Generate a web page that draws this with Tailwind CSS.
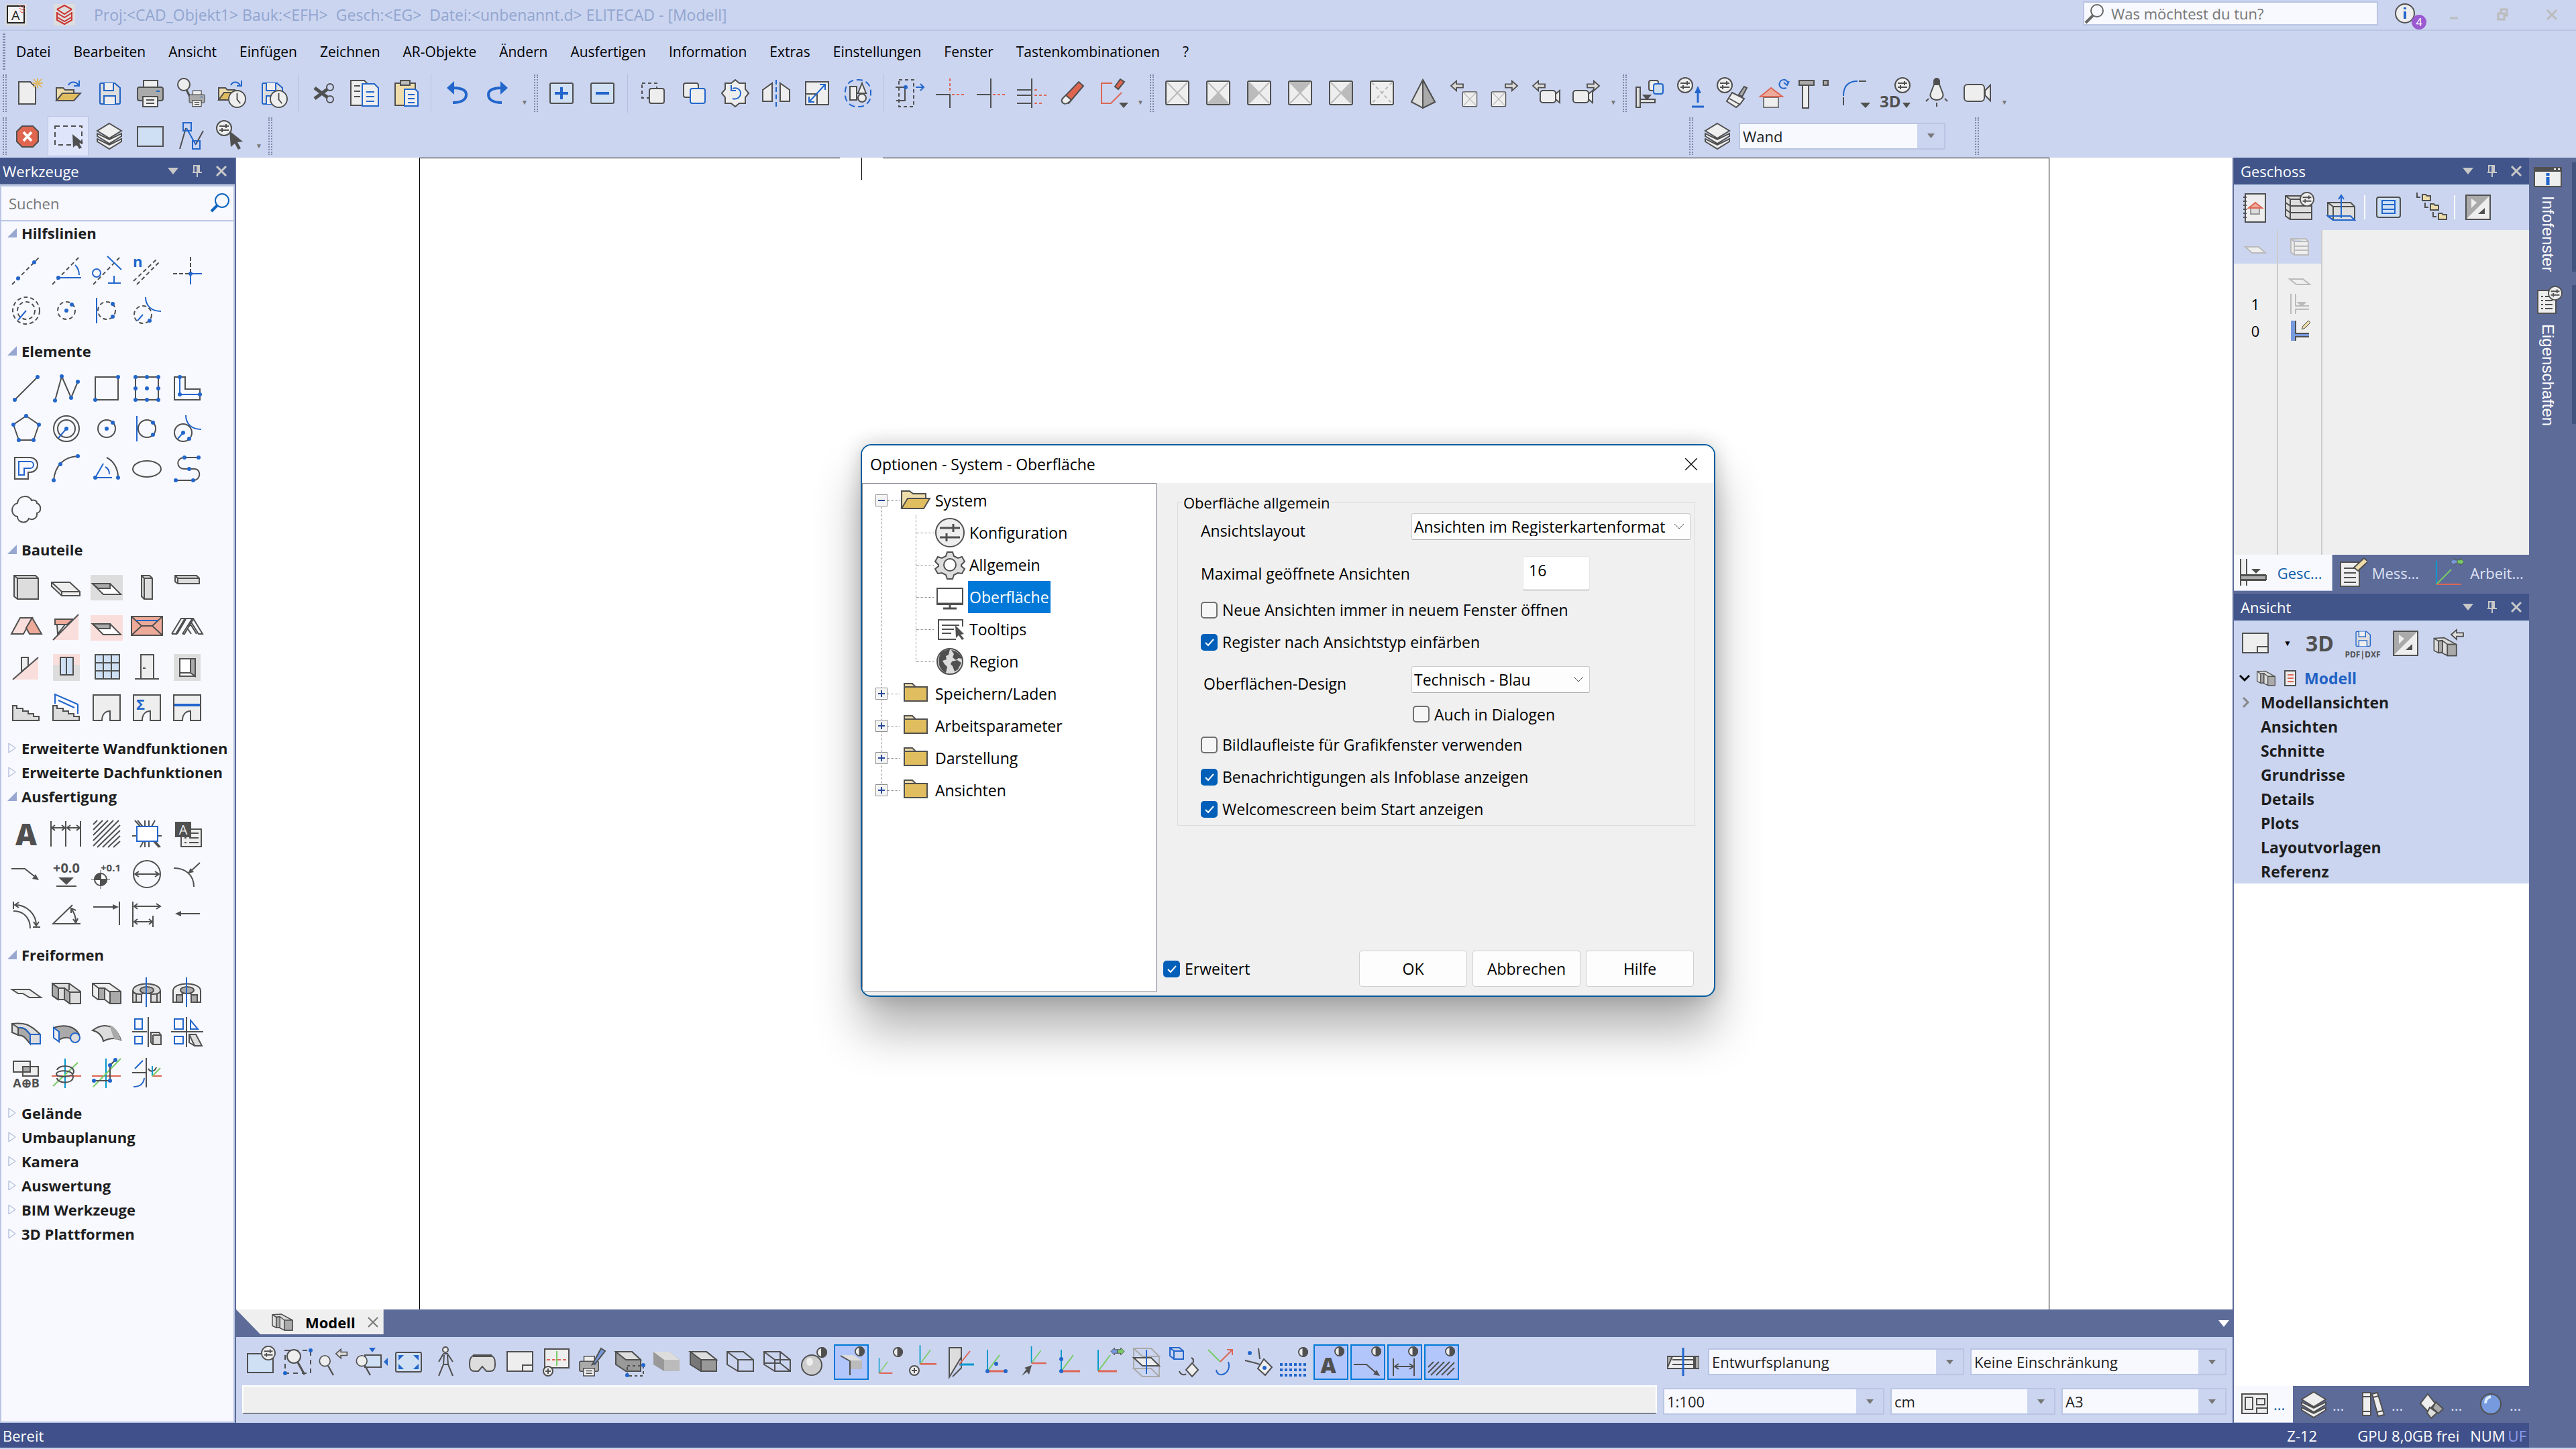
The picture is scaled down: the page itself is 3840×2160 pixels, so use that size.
<!DOCTYPE html>
<html lang="de">
<head>
    <meta charset="UTF-8">
    <meta name="viewport" content="width=device-width, initial-scale=1.0">
    <title>ELITECAD - [Modell]</title>
    <script src="https://cdn.jsdelivr.net/npm/@tailwindcss/browser@4"></script>
</head>
<body class="flex h-screen flex-col overflow-hidden bg-[#cbd5f0] font-['Open_Sans','Noto_Sans',sans-serif] text-[22px] leading-7 text-[#1e1e1e]">

    <!-- Gemeinsame Symbole -->
    <svg class="hidden">
        <symbol id="cfg" viewBox="0 0 24 24"><circle cx="12" cy="12" r="11" fill="#eee"/><path d="M5 9h14M5 15h14M15 6v6M9 12v6"/></symbol>
        <symbol id="half" viewBox="0 0 16 16"><circle cx="8" cy="8" r="7" fill="#eee"/><path d="M8 1a7 7 0 0 1 0 14z" fill="#505050"/></symbol>
        <symbol id="layers" viewBox="0 0 48 48"><path d="M6 32l18 11 18-11v-4l-18 9-18-9zM6 24l18 11 18-11v-4l-18 9-18-9zM24 5l18 11-18 11L6 16z" fill="#eee"/></symbol>
        <symbol id="model" viewBox="0 0 48 48"><path d="M4 9l18-1 22 12v20H28L16 34l-4 1-8-4z" fill="#ddd"/><path d="M4 9l8 5v21M12 14l7-1v21M19 13l9 7v20M28 20h16" /><path d="M12 14l7-1v21l-7 1zM28 20h16v20H28z" fill="#aaa"/></symbol>
        <symbol id="sheet" viewBox="0 0 48 48"><rect x="7" y="6" width="34" height="35" rx="2" fill="#eee"/><path d="M9 8l30 31M39 8L9 39" stroke="#bbb"/></symbol>
        <symbol id="floppy" viewBox="0 0 48 48"><path d="M12 9h20l8 7v22a2 2 0 0 1-2 2H12a2 2 0 0 1-2-2V11a2 2 0 0 1 2-2z" fill="#ddd"/><path d="M16 9v11h14V9M16 40V28h17v12" fill="#eee"/></symbol>
        <symbol id="printer" viewBox="0 0 48 48"><path d="M14 16V5h21v11" fill="#eee"/><rect x="5" y="15" width="38" height="20" rx="3" fill="#aaa"/><path d="M13 29h22v15H13zM18 34h12M18 39h12" fill="#eee"/><path d="M33 21h5" stroke="#26c"/></symbol>
        <symbol id="clock" viewBox="0 0 28 28"><circle cx="14" cy="14" r="13" fill="#eee"/><path d="M14 5v10l5 6"/></symbol>
        <symbol id="lens" viewBox="0 0 48 48"><circle cx="18" cy="16" r="10" fill="#eee"/><path d="M24 25l10 18" stroke-width="3"/></symbol>
        <symbol id="invert" viewBox="0 0 48 48"><rect x="6" y="6" width="36" height="36" fill="#eee"/><path d="M7 7h34L7 41z" fill="#aaa" stroke="none"/><path d="M14 11v14l8-8z" fill="#eee" stroke="none"/><path d="M34 25v9H24z" fill="#505050" stroke="none"/></symbol>
        <symbol id="arrowL" viewBox="0 0 24 20"><path d="M2 10l9-8v5h11v6H11v5z" fill="#ddd"/></symbol>
        <symbol id="axes" viewBox="0 0 48 48"><path d="M12 6v32" stroke="#09c"/><path d="M12 38L30 14" stroke="#7c6"/><path d="M12 38h28" stroke="#d65" stroke-width="3"/></symbol>
        <symbol id="swap" viewBox="0 0 24 14"><path d="M1 7l6-6v3h5v6H7v3z" fill="#79d" /><path d="M23 7l-6-6v3h-5v6h5v3z" fill="#7c6"/></symbol>
        <symbol id="down" viewBox="0 0 16 10"><path d="M0 0h16L8 10z" fill="currentColor" stroke="none"/></symbol>
        <symbol id="pin" viewBox="0 0 16 18"><path d="M3 10V1h8v9M8 1v9M1 11h14M8 11v7M9 1h2v9H9z"/></symbol>
        <symbol id="close" viewBox="0 0 16 16"><path d="M1 1l14 14M15 1L1 15"/></symbol>
        <symbol id="folder" viewBox="0 0 48 36"><path d="M7 8V3h12l4 4v5" fill="#eda"/><path d="M7 8h34v21H7z" fill="#e0be60"/></symbol>
    </svg>

    <!-- Titelleiste -->
    <header class="flex h-[46px] shrink-0 items-center border-b-2 border-[#b9c5e3]">
        <svg class="ml-2 size-8 shrink-0 overflow-visible" viewBox="0 0 32 32" fill="none"><path fill="#ddd" d="M0 0h32v32H0z"/><path d="M3 3h25v25H3z" fill="#f4f4f4" stroke="#222" stroke-width="2"/><text x="9" y="24" font-size="20" fill="#222">A</text><path d="M21 2l4 3 4-3M21 6l4 3 4-3M21 10l4 3 4-3" stroke="#d44"/></svg>
        <svg class="ml-10 size-8 shrink-0" viewBox="0 0 32 32" fill="none" stroke="#c33" stroke-width="2"><path fill="#ddd" stroke="none" d="M0 0h32v32H0z"/><path d="M5 8l11-6 11 6M5 8l11 7 11-7M5 12v12l11 6 11-6V12M6 14l10 6 10-6M6 20l10 6 10-6"/></svg>
        <h1 class="ml-7 text-[23px] whitespace-pre text-[#92a5cf]">Proj:&lt;CAD_Objekt1&gt; Bauk:&lt;EFH&gt;  Gesch:&lt;EG&gt;  Datei:&lt;unbenannt.d&gt; ELITECAD - [Modell]</h1>
        <label class="mr-5 mb-1 ml-auto flex h-9 w-[440px] items-center border-2 border-[#b9c5e3] bg-[#f8f9fe]">
            <svg class="size-8" viewBox="0 0 32 32" fill="none" stroke="#666" stroke-width="2"><circle cx="19" cy="12" r="9"/><path d="M13 19L2 30" stroke-width="4"/></svg>
            <input type="text" aria-label="Suche" placeholder="Was möchtest du tun?" class="min-w-0 flex-1 pl-2 outline-none placeholder:text-[#767676]">
        </label>
        <button aria-label="Info" class="relative w-14 pb-1">
            <svg class="size-10" viewBox="0 0 40 40"><circle cx="20" cy="20" r="14" fill="#eee" stroke="#505050" stroke-width="2"/><path d="M20 17v11M20 11v3" stroke="#26c" stroke-width="4"/></svg>
            <span class="absolute right-1 bottom-0 size-[22px] rounded-full bg-[#9b59d0] text-center text-base leading-[22px] text-white">4</span>
        </button>
        <div class="flex fill-none stroke-[#bbb] stroke-3">
            <button aria-label="Minimieren" class="grid w-[73px] place-items-center"><svg class="size-6" viewBox="0 0 24 24"><path d="M6 17h12"/></svg></button>
            <button aria-label="Wiederherstellen" class="grid w-[73px] place-items-center"><svg class="size-6" viewBox="0 0 24 24"><path d="M5 10h9v9H5zM9 9V4h9v9h-3"/></svg></button>
            <button aria-label="Schließen" class="grid w-[73px] place-items-center"><svg class="size-4"><use href="#close"/></svg></button>
        </div>
    </header>

    <!-- Menü -->
    <nav class="flex h-[62px] shrink-0 items-center text-[21px] text-black">
        <span class="mr-4 ml-1 h-[54px] w-1 border-x-2 border-dotted border-[#7d88a8]"></span>
        <div class="flex gap-[34px]">
            <a href="#">Datei</a><a href="#">Bearbeiten</a><a href="#">Ansicht</a><a href="#">Einfügen</a><a href="#">Zeichnen</a><a href="#">AR-Objekte</a><a href="#">Ändern</a><a href="#">Ausfertigen</a><a href="#">Information</a><a href="#">Extras</a><a href="#">Einstellungen</a><a href="#">Fenster</a><a href="#">Tastenkombinationen</a><a href="#">?</a>
        </div>
    </nav>

    <!-- Symbolleiste 1 -->
    <div class="flex h-[62px] shrink-0 items-center fill-none stroke-[#505050] stroke-2 [&_svg]:size-12 [&_svg]:overflow-visible [&>button]:grid [&>button]:w-[61px] [&>button]:shrink-0 [&>button]:place-items-center [&>hr]:mx-[7px] [&>hr]:h-[58px] [&>hr]:w-px [&>hr]:border-0 [&>hr]:bg-[#b4c0e0] [&>span]:mx-1 [&>span]:h-[56px] [&>span]:w-[6px] [&>span]:shrink-0 [&>span]:border-x-2 [&>span]:border-dotted [&>span]:border-[#7d88a8] [&>span:first-child]:mr-0 [&>i]:w-5 [&>i]:shrink-0 [&>i]:self-end [&>i]:pb-[10px] [&>i]:text-center [&>i]:text-[10px] [&>i]:leading-4 [&>i]:text-[#777] [&>i]:not-italic">
        <span></span>
        <button aria-label="Neu"><svg viewBox="0 0 48 48"><path d="M11 7h17l8 8v25H11z" fill="#eee"/><path d="M39 1v16M31 9h16M33 3l12 12M45 3L33 15" stroke="#db6"/></svg></button>
        <button aria-label="Öffnen"><svg viewBox="0 0 48 48"><path d="M6 35V16h10l3 3h13v6" fill="#eda"/><path d="M6 35l9-11h27l-10 11z" fill="#e0be60"/><path d="M24 12c3-6 11-6 15 0M40 5v8h-8" stroke="#26c"/></svg></button>
        <button aria-label="Speichern" class="stroke-[#2062c4]"><svg viewBox="0 0 48 48"><use href="#floppy"/></svg></button>
        <button aria-label="Drucken"><svg viewBox="0 0 48 48"><use href="#printer"/></svg></button>
        <button aria-label="Druckvorschau"><svg viewBox="0 0 48 48"><circle cx="13" cy="11" r="9" fill="#eee"/><path d="M17 19l5 10" stroke-width="3"/><use href="#printer" x="18" y="17" width="29" height="29"/></svg></button>
        <button aria-label="Zuletzt geöffnet"><svg viewBox="0 0 48 48"><path d="M4 34V16h10l3 3h11v6" fill="#eda"/><path d="M4 34l8-11h20l-8 11z" fill="#e0be60"/><path d="M22 12c3-6 10-6 14 0M38 5v8h-7" stroke="#26c"/><use href="#clock" x="18" y="19" width="27" height="27"/></svg></button>
        <button aria-label="Zuletzt gespeichert"><svg viewBox="0 0 48 48"><g stroke="#26c"><use href="#floppy" x="-2"/></g><use href="#clock" x="19" y="19" width="27" height="27"/></svg></button>
        <hr>
        <button aria-label="Ausschneiden"><svg viewBox="0 0 48 48"><circle cx="33" cy="15" r="5"/><circle cx="33" cy="33" r="5"/><path d="M29 18L10 32M29 30L10 16" stroke-width="5"/></svg></button>
        <button aria-label="Kopieren"><svg viewBox="0 0 48 48"><path d="M3 5h20l5 5v32H3zM8 13h9M8 21h9M8 29h9" fill="#eee"/><path d="M20 10h18l6 6v27H20zM26 22h12M26 29h12M26 36h12" fill="#eee" stroke="#26c"/></svg></button>
        <button aria-label="Einfügen"><svg viewBox="0 0 48 48"><path d="M8 9h30v33H8z" fill="#eda"/><path d="M16 5h14v7H16z" fill="#bbb"/><path d="M22 18h16l4 4v21H22zM27 26h10M27 32h10M27 38h10" fill="#eee" stroke="#26c"/></svg></button>
        <hr>
        <button aria-label="Rückgängig"><svg viewBox="0 0 48 48"><path d="M18 38c14 0 20-5 20-12s-8-10-20-10" stroke="#26c" stroke-width="4" fill="none"/><path d="M20 6v20L9 16z" fill="#26c" stroke="none"/></svg></button>
        <button aria-label="Wiederholen"><svg viewBox="0 0 48 48"><path d="M30 38c-14 0-20-5-20-12s8-10 20-10" stroke="#26c" stroke-width="4" fill="none"/><path d="M28 6v20l11-10z" fill="#26c" stroke="none"/></svg></button>
        <i>▼</i><span></span>
        <button aria-label="Einblenden"><svg viewBox="0 0 48 48"><rect x="7" y="9" width="34" height="30" rx="2" fill="#d1e0f3"/><path d="M24 15v18M14 24h20" stroke="#26c" stroke-width="4"/></svg></button>
        <button aria-label="Ausblenden"><svg viewBox="0 0 48 48"><rect x="7" y="9" width="34" height="30" rx="2" fill="#d1e0f3"/><path d="M14 24h20" stroke="#26c" stroke-width="4"/></svg></button>
        <hr>
        <button aria-label="Verschieben"><svg viewBox="0 0 48 48"><rect x="7" y="9" width="22" height="22" stroke-dasharray="5 4"/><rect x="18" y="17" width="22" height="22" rx="3" fill="#eee"/></svg></button>
        <button aria-label="Objekt kopieren"><svg viewBox="0 0 48 48"><rect x="8" y="9" width="22" height="21" rx="3" fill="#eee"/><rect x="18" y="17" width="22" height="22" rx="3" fill="#eee" stroke="#26c"/></svg></button>
        <button aria-label="Drehen"><svg viewBox="0 0 48 48"><path d="M24 4l6 5h9v9l5 6-5 6v9h-9l-6 5-6-5H9v-9l-5-6 5-6V9h9z" fill="#eee"/><path d="M20 32c6 2 12-2 12-8s-6-9-12-7M18 12v8h7" stroke="#26c"/></svg></button>
        <button aria-label="Spiegeln"><svg viewBox="0 0 48 48"><path d="M4 19L18 9v27H4zM44 19L30 9v27h14z" fill="#eee"/><path d="M24 4v40" stroke="#26c" stroke-dasharray="7 4"/></svg></button>
        <button aria-label="Skalieren"><svg viewBox="0 0 48 48"><path d="M7 7h34v34H7zM7 25h17v16" fill="#eee"/><path d="M12 37L36 11M28 11h8v8M12 29v8h8" stroke="#26c"/></svg></button>
        <button aria-label="Anordnen"><svg viewBox="0 0 48 48"><rect x="5" y="4" width="38" height="40" rx="17" stroke="#26c" stroke-dasharray="9 5"/><path d="M12 14h10v20H12zM30 9l6 15H24z" fill="#eee"/><circle cx="30" cy="31" r="6" fill="#eee"/></svg></button>
        <hr>
        <button aria-label="Strecken"><svg viewBox="0 0 48 48"><path d="M9 4h22v40H9z" stroke-dasharray="5 4"/><path d="M4 15h14v20H5"/><path d="M34 15h12M41 10l5 5-5 5" stroke="#26c"/><circle cx="19" cy="15" r="3" fill="#26c" stroke="none"/></svg></button>
        <button aria-label="Ecke"><svg viewBox="0 0 48 48"><path d="M3 26h21v20"/><path d="M24 2v22M27 26h20" stroke="#d65" stroke-dasharray="4 3"/></svg></button>
        <button aria-label="Trimmen"><svg viewBox="0 0 48 48"><path d="M3 26h21M24 2v44"/><path d="M27 26h20" stroke="#d65" stroke-dasharray="4 3"/></svg></button>
        <button aria-label="Mehrfach trimmen"><svg viewBox="0 0 48 48"><path d="M24 2v44M2 19h22M2 27h22M2 39h22"/><path d="M28 19h5M28 27h20M28 39h14" stroke="#d65" stroke-dasharray="4 3"/></svg></button>
        <button aria-label="Löschen"><svg viewBox="0 0 48 48"><path d="M33 7l7 6-22 26-9-7z" fill="#e0654f"/><path d="M14 27l8 7c-5 6-10 7-13 4s-1-6 5-11z" fill="#eee"/></svg></button>
        <button aria-label="Teil löschen"><svg viewBox="0 0 48 48"><path d="M22 9H6v30h14l16-16" stroke="#d65"/><path d="M34 3l6 4-9 11-5-4z" fill="#e0654f"/><path d="M32 38h14l-7 8z" fill="#505050" stroke="none"/></svg></button>
        <i>▼</i><span></span>
        <button aria-label="Ansicht oben"><svg><use href="#sheet"/></svg></button>
        <button aria-label="Ansicht vorne"><svg viewBox="0 0 48 48"><use href="#sheet"/><path d="M24 24l15 16H9z" fill="#bbb" stroke="none"/></svg></button>
        <button aria-label="Ansicht links"><svg viewBox="0 0 48 48"><use href="#sheet"/><path d="M24 24L8 40V8z" fill="#bbb" stroke="none"/></svg></button>
        <button aria-label="Ansicht hinten"><svg viewBox="0 0 48 48"><use href="#sheet"/><path d="M24 24L40 7H8z" fill="#bbb" stroke="none"/></svg></button>
        <button aria-label="Ansicht rechts"><svg viewBox="0 0 48 48"><use href="#sheet"/><path d="M24 24l16 16V8z" fill="#bbb" stroke="none"/></svg></button>
        <button aria-label="Ansicht unten"><svg viewBox="0 0 48 48"><rect x="7" y="6" width="34" height="35" rx="2" fill="#eee"/><path d="M9 8l30 31M39 8L9 39" stroke="#bbb" stroke-dasharray="5 4"/></svg></button>
        <button aria-label="Axonometrie"><svg viewBox="0 0 48 48"><path d="M24 4l18 33-18 9L7 37z" fill="#ddd"/><path d="M24 4l18 33-18 9z" fill="#aaa"/></svg></button>
        <button aria-label="Vorherige Ansicht"><svg viewBox="0 0 48 48"><use href="#arrowL" x="2" y="4" width="24" height="18"/><use href="#sheet" x="18" y="18" width="30" height="30"/></svg></button>
        <button aria-label="Nächste Ansicht"><svg viewBox="0 0 48 48"><g transform="matrix(-1 0 0 1 48 0)"><use href="#arrowL" x="2" y="4" width="24" height="18"/></g><use href="#sheet" x="0" y="18" width="30" height="30"/></svg></button>
        <button aria-label="Vorherige Kamera"><svg viewBox="0 0 48 48"><use href="#arrowL" x="2" y="4" width="24" height="18"/><rect x="16" y="20" width="23" height="18" rx="4" fill="#eee"/><path d="M39 25l6-5v18l-6-5z" fill="#eee"/></svg></button>
        <button aria-label="Nächste Kamera"><svg viewBox="0 0 48 48"><g transform="matrix(-1 0 0 1 48 0)"><use href="#arrowL" x="2" y="4" width="24" height="18"/></g><rect x="4" y="20" width="23" height="18" rx="4" fill="#eee"/><path d="M27 25l6-5v18l-6-5z" fill="#eee"/></svg></button>
        <i>▼</i><span></span>
        <button aria-label="Geschoss kopieren"><svg viewBox="0 0 48 48"><path d="M3 15h6v30H3zM9 33h22v5H9z" fill="#ddd"/><path d="M14 27h10l-5 6z" fill="#505050"/><rect x="22" y="5" width="14" height="15" rx="3" fill="#eee"/><rect x="29" y="10" width="14" height="15" rx="3" fill="#cde" stroke="#26c"/></svg></button>
        <button aria-label="Höhe einstellen"><svg viewBox="0 0 48 48"><use href="#cfg" x="3" width="24" height="24"/><path d="M34 38V18M25 44h18" stroke="#26c" stroke-width="3"/><path d="M34 13l5 11H29z" fill="#26c" stroke="none"/></svg></button>
        <button aria-label="Darstellung einstellen"><svg viewBox="0 0 48 48"><use href="#cfg" x="1" width="24" height="24"/><path d="M34 26l8-12 4 2-7 13z" fill="#aaa"/><path d="M24 23l18 9-6 8-6 5-14-9z" fill="#eee"/><path d="M20 32l16 9"/></svg></button>
        <button aria-label="Haus aktualisieren"><svg viewBox="0 0 48 48"><path d="M10 30h22v15H10z" fill="#eee" stroke="#777"/><path d="M5 29l16-13 17 13z" fill="#ea9" stroke="#d65"/><path d="M44 16c-8 3-12-3-10-8s9-6 12 0M48 6l-3 6-5-4" stroke="#26c"/></svg></button>
        <button aria-label="Stütze"><svg viewBox="0 0 48 48"><path d="M2 5h22v7H2zM38 5h7v7h-7z" fill="#aaa"/><path d="M7 12h9v34H7z" fill="#eee"/></svg></button>
        <button aria-label="Rundung"><svg viewBox="0 0 48 48"><path d="M7 28C7 14 14 6 28 6" stroke="#26c"/><path d="M30 6h11M7 30v12"/><path d="M32 38h15l-7 8z" fill="#505050" stroke="none"/></svg></button>
        <button aria-label="3D Einstellungen"><svg viewBox="0 0 48 48"><use href="#cfg" x="22" width="24" height="24"/><text x="0" y="45" font-size="24" font-weight="700" fill="#505050" stroke="none">3D</text><path d="M34 38h12l-6 8z" fill="#505050" stroke="none"/></svg></button>
        <button aria-label="Licht"><svg viewBox="0 0 48 48"><path d="M20 6a4 4 0 0 1 8 0v3h-8z" fill="#505050"/><path d="M20 11h8l5 13c2 5-2 10-9 10s-11-5-9-10zM12 32l-4 4M36 32l4 4M24 38v6" fill="#eee"/></svg></button>
        <button aria-label="Kamera"><svg viewBox="0 0 48 48"><rect x="4" y="11" width="30" height="25" rx="5" fill="#eee"/><path d="M35 20l8-8v23l-8-8z" fill="#eee"/></svg></button>
        <i>▼</i>
    </div>

    <!-- Symbolleiste 2 -->
    <div class="flex h-[65px] shrink-0 items-center fill-none stroke-[#505050] stroke-2 [&>button]:grid [&>button]:h-[60px] [&>button]:w-[61px] [&>button]:shrink-0 [&>button]:place-items-center [&>button>svg]:size-12 [&>span]:mx-1 [&>span]:h-[56px] [&>span]:w-[6px] [&>span]:shrink-0 [&>span]:border-x-2 [&>span]:border-dotted [&>span]:border-[#7d88a8] [&>span:first-child]:mr-0">
        <span></span>
        <button aria-label="Abbrechen"><svg viewBox="0 0 48 48"><path d="M16 9h16l8 8v15l-8 8H16l-8-8V17z" fill="#e0654f"/><path d="M18 18l12 13M30 18L18 31" stroke="#fff" stroke-width="4"/></svg></button>
        <button aria-label="Auswahl" class="border border-[#b9c5e3] bg-[#dfe6fb]"><svg viewBox="0 0 48 48"><path d="M4 9h40v28H4z" stroke-dasharray="7 5"/><path d="M30 21l16 13-6 1 4 6-4 2-4-7-5 5z" fill="#505050" stroke="none"/></svg></button>
        <button aria-label="Ebenen"><svg><use href="#layers"/></svg></button>
        <button aria-label="Fläche"><svg viewBox="0 0 48 48"><path d="M5 10h38v29H5z" fill="#cfe0f4"/></svg></button>
        <button aria-label="Punkte"><svg viewBox="0 0 48 48"><path d="M7 43L16 12M31 36L42 16"/><path d="M17 12l14 25M12 4h12v12H12zM26 31h11v12H26z" stroke="#26c"/></svg></button>
        <button aria-label="Auswahlfilter"><svg viewBox="0 0 48 48"><use href="#cfg" width="24" height="24"/><path d="M20 16l20 16-8 1 5 9-4 2-5-9-6 5z" fill="#505050" stroke="none"/></svg></button>
        <i class="w-5 self-end pb-[10px] text-center text-[10px] leading-4 text-[#777] not-italic">▼</i><span></span>
        <div class="ml-auto flex h-full w-[1322px] items-center [&>span]:h-[56px] [&>span]:w-[6px] [&>span]:border-x-2 [&>span]:border-dotted [&>span]:border-[#7d88a8]">
            <span></span>
            <svg class="mr-2 ml-3 size-12"><use href="#layers"/></svg>
            <div class="mr-11 grid h-10 w-[308px] border-2 border-[#b9c5e3] bg-[#f8f9fe]">
                <select aria-label="Ebene" class="appearance-none pl-1 [grid-area:1/1]"><option>Wand</option></select>
                <div class="pointer-events-none grid w-10 place-items-center justify-self-end bg-[#cbd5f0] text-[#777] [grid-area:1/1]"><svg class="h-[7px] w-[11px]"><use href="#down"/></svg></div>
            </div>
            <span></span>
        </div>
    </div>

    <main class="flex min-h-0 flex-1">

        <!-- Werkzeuge -->
        <aside class="flex w-[352px] shrink-0 flex-col border-r-2 border-[#5d6b99] bg-[#f8f9fe]">
            <div class="flex h-10 shrink-0 items-center gap-5 bg-[#41558b] pr-3 pl-1 text-white">
                <h2 class="mr-auto">Werkzeuge</h2>
                <svg class="h-[10px] w-4 text-[#c8c8c8]"><use href="#down"/></svg>
                <svg class="h-[18px] w-4 fill-none stroke-[#c8c8c8] stroke-2"><use href="#pin"/></svg>
                <svg class="size-4 fill-none stroke-[#c8c8c8] stroke-3"><use href="#close"/></svg>
            </div>
            <label class="mt-px flex h-[54px] shrink-0 items-center border-2 border-[#b9c5e3] pr-1">
                <input type="text" aria-label="Werkzeug suchen" placeholder="Suchen" class="min-w-0 flex-1 pl-[11px] outline-none placeholder:text-[#767676]">
                <svg class="size-8" viewBox="0 0 32 32" fill="none" stroke="#0a64c0"><circle cx="19" cy="12" r="10" stroke-width="2"/><path d="M12 19L3 28" stroke-width="4"/></svg>
            </label>

            <div class="flex-1 overflow-hidden border-x-2 border-b-2 border-[#b9c5e3] fill-none stroke-[#505050] stroke-2 font-bold [&_h3]:flex [&_h3]:h-9 [&_h3]:items-center [&_h3]:pb-[2px] [&_h3>svg]:mr-[6px] [&_h3>svg]:ml-2 [&_h3>svg]:size-4 [&_h3>svg]:stroke-1 [&_button]:grid [&_button]:h-[60px] [&_button]:place-items-center [&_button>svg]:size-12 [&_button>svg]:overflow-visible [&_section>div]:ml-[7px] [&_section>div]:grid [&_section>div]:w-[300px] [&_section>div]:grid-cols-5 [&_section>div]:pt-[7px] [&_section>div]:pb-[13px]">
                <section>
                    <h3><svg viewBox="0 0 16 16"><path d="M15 1v14H1z" fill="#97a7cf" stroke="none"/></svg>Hilfslinien</h3>
                    <div>
                        <button aria-label="Hilfslinie"><svg viewBox="0 0 48 48"><path d="M3 45L45 3" stroke-dasharray="6 4"/><g fill="#26c" stroke="none"><circle cx="12" cy="36" r="3"/><circle cx="36" cy="12" r="3"/></g></svg></button>
                        <button aria-label="Hilfslinie Winkel"><svg viewBox="0 0 48 48"><path d="M3 45L44 3" stroke-dasharray="6 4"/><path d="M12 35h34M37 16c4 4 6 9 6 15" stroke="#26c"/><circle cx="12" cy="35" r="3" fill="#26c" stroke="none"/></svg></button>
                        <button aria-label="Hilfslinie Tangente"><svg viewBox="0 0 48 48"><path d="M4 45L45 3" stroke-dasharray="6 4"/><g stroke="#26c"><circle cx="9" cy="28" r="6"/><path d="M25 3l21 20M26 43h19M35 43V32"/></g></svg></button>
                        <button aria-label="Hilfslinie parallel"><svg viewBox="0 0 48 48"><path d="M4 40L38 8M9 45l33-33" stroke-dasharray="6 4"/><text x="3" y="19" font-size="22" fill="#26c" stroke="none">n</text></svg></button>
                        <button aria-label="Hilfslinie Kreuz"><svg viewBox="0 0 48 48"><path d="M3 29h26M29 4v25" stroke-dasharray="6 3"/><path d="M29 29h17M29 29v16" stroke="#26c"/><circle cx="29" cy="29" r="3" fill="#26c" stroke="none"/></svg></button>
                        <button aria-label="Hilfskreise"><svg viewBox="0 0 48 48"><circle cx="24" cy="24" r="20" stroke-dasharray="6 4"/><circle cx="24" cy="24" r="13" stroke-dasharray="6 4"/><path d="M24 24L12 38" stroke="#26c"/></svg></button>
                        <button aria-label="Hilfskreis Punkt"><svg viewBox="0 0 48 48"><circle cx="24" cy="24" r="13" stroke-dasharray="6 4"/><g fill="#26c" stroke="none"><circle cx="24" cy="24" r="3"/><circle cx="32" cy="15" r="3"/></g></svg></button>
                        <button aria-label="Hilfskreis Linie"><svg viewBox="0 0 48 48"><circle cx="24" cy="24" r="13" stroke-dasharray="6 4"/><path d="M9 5v38" stroke="#26c"/><g fill="#26c" stroke="none"><circle cx="33" cy="14" r="3"/><circle cx="33" cy="33" r="3"/></g></svg></button>
                        <button aria-label="Hilfskreis Bogen"><svg viewBox="0 0 48 48"><circle cx="18" cy="30" r="13" stroke-dasharray="6 4"/><path d="M18 30l-8 9M22 4c0 13 9 21 23 21" stroke="#26c"/><circle cx="28" cy="39" r="3" fill="#26c" stroke="none"/></svg></button>
                    </div>
                </section>
                <section>
                    <h3><svg viewBox="0 0 16 16"><path d="M15 1v14H1z" fill="#97a7cf" stroke="none"/></svg>Elemente</h3>
                    <div>
                        <button aria-label="Linie"><svg viewBox="0 0 48 48"><path d="M7 41L41 7"/><g fill="#26c" stroke="none"><circle cx="7" cy="41" r="3"/><circle cx="41" cy="7" r="3"/></g></svg></button>
                        <button aria-label="Polylinie"><svg viewBox="0 0 48 48"><path d="M7 42L17 6l14 32L41 14"/><g fill="#26c" stroke="none"><circle cx="7" cy="42" r="3"/><circle cx="17" cy="6" r="3"/><circle cx="31" cy="38" r="3"/><circle cx="41" cy="14" r="3"/></g></svg></button>
                        <button aria-label="Rechteck"><svg viewBox="0 0 48 48"><path d="M7 7h34v34H7z"/><g fill="#26c" stroke="none"><circle cx="7" cy="41" r="3"/><circle cx="41" cy="7" r="3"/></g></svg></button>
                        <button aria-label="Rechteck Punkte"><svg viewBox="0 0 48 48"><path d="M7 7h34v34H7z"/><g fill="#26c" stroke="none"><circle cx="7" cy="7" r="3"/><circle cx="24" cy="7" r="3"/><circle cx="41" cy="7" r="3"/><circle cx="7" cy="24" r="3"/><circle cx="24" cy="24" r="3"/><circle cx="41" cy="24" r="3"/><circle cx="7" cy="41" r="3"/><circle cx="24" cy="41" r="3"/><circle cx="41" cy="41" r="3"/></g></svg></button>
                        <button aria-label="Doppellinie"><svg viewBox="0 0 48 48"><path d="M5 7h16v18h22v16H5z"/><path d="M13 7v26h30" stroke="#26c"/><g fill="#26c" stroke="none"><circle cx="13" cy="7" r="3"/><circle cx="13" cy="33" r="3"/><circle cx="43" cy="33" r="3"/></g></svg></button>
                        <button aria-label="Polygon"><svg viewBox="0 0 48 48"><path d="M24 5l19 13-8 23H13L5 18z"/><g fill="#26c" stroke="none"><circle cx="24" cy="5" r="3"/><circle cx="43" cy="18" r="3"/><circle cx="35" cy="41" r="3"/><circle cx="13" cy="41" r="3"/><circle cx="5" cy="18" r="3"/></g></svg></button>
                        <button aria-label="Kreise"><svg viewBox="0 0 48 48"><circle cx="24" cy="24" r="19"/><circle cx="24" cy="24" r="13"/><path d="M24 24L12 38" stroke="#26c"/><circle cx="24" cy="24" r="3" fill="#26c" stroke="none"/></svg></button>
                        <button aria-label="Kreis"><svg viewBox="0 0 48 48"><circle cx="24" cy="24" r="13"/><g fill="#26c" stroke="none"><circle cx="24" cy="24" r="3"/><circle cx="33" cy="15" r="3"/></g></svg></button>
                        <button aria-label="Kreis Linie"><svg viewBox="0 0 48 48"><circle cx="24" cy="24" r="13"/><path d="M9 5v38" stroke="#26c"/><g fill="#26c" stroke="none"><circle cx="33" cy="15" r="3"/><circle cx="33" cy="33" r="3"/></g></svg></button>
                        <button aria-label="Kreis Bogen"><svg viewBox="0 0 48 48"><circle cx="18" cy="30" r="13"/><path d="M18 30l-8 9M22 4c0 13 9 21 23 21" stroke="#26c"/><g fill="#26c" stroke="none"><circle cx="18" cy="30" r="3"/><circle cx="27" cy="39" r="3"/></g></svg></button>
                        <button aria-label="Kontur"><svg viewBox="0 0 48 48"><path d="M7 7h23a11 11 0 0 1 0 22h-3v10H7z"/><path d="M13 13h17a5 5 0 0 1 0 10h-9v10h-8z" stroke="#26c"/></svg></button>
                        <button aria-label="Bogen"><svg viewBox="0 0 48 48"><path d="M5 41C7 20 19 6 41 5"/><g fill="#26c" stroke="none"><circle cx="5" cy="41" r="3"/><circle cx="15" cy="17" r="3"/><circle cx="41" cy="5" r="3"/></g></svg></button>
                        <button aria-label="Bogen Winkel"><svg viewBox="0 0 48 48"><path d="M24 7c10 5 17 16 17 30"/><path d="M32 37H7l12-21M22 21c4 2 6 6 6 11" stroke="#26c"/><g fill="#26c" stroke="none"><circle cx="7" cy="37" r="3"/><circle cx="41" cy="37" r="3"/></g></svg></button>
                        <button aria-label="Ellipse"><svg viewBox="0 0 48 48"><ellipse cx="24" cy="24" rx="21" ry="12"/></svg></button>
                        <button aria-label="Spline"><svg viewBox="0 0 48 48"><path d="M41 7H20c-13 0-13 17 0 17h15c10 0 10 17-2 17H7"/><g fill="#26c" stroke="none"><circle cx="20" cy="7" r="3"/><circle cx="41" cy="7" r="3"/><circle cx="27" cy="24" r="3"/><circle cx="33" cy="41" r="3"/><circle cx="7" cy="41" r="3"/></g></svg></button>
                        <button aria-label="Wolke"><svg viewBox="0 0 48 48"><path d="M11 15C12 3 29 2 32 11c4-1 8 0 8 4 7 3 7 13 0 15 1 8-7 11-12 8-4 9-17 6-17-3C1 34 0 18 11 15z"/></svg></button>
                    </div>
                </section>
                <section>
                    <h3><svg viewBox="0 0 16 16"><path d="M15 1v14H1z" fill="#97a7cf" stroke="none"/></svg>Bauteile</h3>
                    <div>
                        <button aria-label="Wand"><svg viewBox="0 0 48 48"><path d="M6 7h32l4 4v31H11l-5-4z" fill="#ddd"/><path d="M6 7l5 4h31M11 11v31"/></svg></button>
                        <button aria-label="Decke"><svg viewBox="0 0 48 48"><path d="M2 17h27l15 14v6H17L2 23z" fill="#eee"/><path d="M2 17l15 14h27M17 31v6"/></svg></button>
                        <button aria-label="Aussparung Decke"><svg viewBox="0 0 48 48"><path d="M0 6h48v38H0z" fill="#ddd" stroke="none"/><path d="M3 19h26l16 16H19z" fill="#fff"/><path d="M3 19h26v7H11z" fill="#aaa"/></svg></button>
                        <button aria-label="Stütze"><svg viewBox="0 0 48 48"><path d="M16 7h12l4 4v31H20l-4-4z" fill="#ddd"/><path d="M16 7l4 4h12M20 11v31"/></svg></button>
                        <button aria-label="Unterzug"><svg viewBox="0 0 48 48"><path d="M6 7h32l4 4v8H10l-4-3z" fill="#ddd"/><path d="M6 7l4 4h32M10 11v8"/></svg></button>
                        <button aria-label="Dach"><svg viewBox="0 0 48 48"><path d="M2 34l13-24h18L20 34z" fill="#f9dedb"/><path d="M33 10l14 24H29l-5-9z" fill="#ea9"/></svg></button>
                        <button aria-label="Gaube"><svg viewBox="0 0 48 48"><path d="M4 43L42 5v38z" fill="#f9dedb" stroke="none"/><path d="M10 20h12L11 34z" fill="#eee"/><path d="M7 12h27l-9 8H7z" fill="#ea9"/><path d="M4 43L42 5"/></svg></button>
                        <button aria-label="Aussparung Dach"><svg viewBox="0 0 48 48"><path d="M0 6h48v38H0z" fill="#f9dedb" stroke="none"/><path d="M3 19h26l16 16H19z" fill="#fff"/><path d="M3 19h26v7H11z" fill="#aaa"/></svg></button>
                        <button aria-label="Walmdach"><svg viewBox="0 0 48 48"><path d="M1 8h46v28H1z" fill="#ea9"/><path d="M1 8l15 14h16L47 8M1 36l15-14M47 36L32 22"/><path d="M8 14h32" stroke="#26c"/></svg></button>
                        <button aria-label="Sparren"><svg viewBox="0 0 48 48"><path d="M1 34l14-23h18l14 23h-6L29 15M9 34l13-22M7 34L20 12M17 34l14-22M20 34L33 12M38 34L28 18M30 34l-6-9M1 34h8M17 34h4"/></svg></button>
                        <button aria-label="Kamin"><svg viewBox="0 0 48 48"><path d="M4 42L42 9v33z" fill="#f9dedb" stroke="none"/><path d="M17 30V9h10v13z" fill="#eee"/><path d="M4 42L42 9"/></svg></button>
                        <button aria-label="Fenster"><svg viewBox="0 0 48 48"><path d="M4 4h40v16H4z" fill="#f9dedb" stroke="none"/><path d="M4 20h40v24H4z" fill="#ddd" stroke="none"/><path d="M15 9h19v26H15zM24 9v26" fill="#cfe0f4"/></svg></button>
                        <button aria-label="Fassade"><svg viewBox="0 0 48 48"><path d="M7 5h36v36H7zM7 17h36M7 29h36M19 5v36M31 5v36" fill="#cfe0f4"/></svg></button>
                        <button aria-label="Tür"><svg viewBox="0 0 48 48"><path d="M15 41V5h19v36" fill="#eee"/><path d="M6 41h36M18 25h4"/></svg></button>
                        <button aria-label="Nische"><svg viewBox="0 0 48 48"><path d="M4 4h40v40H4z" fill="#ddd" stroke="none"/><path d="M13 11h23v26H13z" fill="#fff"/><path d="M29 11h7v26l-7-5zM13 32h16" fill="#aaa"/></svg></button>
                        <button aria-label="Treppe"><svg viewBox="0 0 48 48"><path d="M4 21h6v4h9v4h8v4h8v4h8v6H4z" fill="#ddd"/></svg></button>
                        <button aria-label="Geländer"><svg viewBox="0 0 48 48"><path d="M4 21h6v4h9v4h8v4h8v4h8v6H4z" fill="#ddd"/><path d="M7 18V4l34 15v14M12 13l24 11" stroke="#26c"/></svg></button>
                        <button aria-label="Raum"><svg viewBox="0 0 48 48"><path d="M4 5h40v38H29V29c-8 0-12 6-12 14H4z" fill="#eee"/></svg></button>
                        <button aria-label="Raumauswertung"><svg viewBox="0 0 48 48"><path d="M4 5h40v38H29V29c-8 0-12 6-12 14H4z" fill="#eee"/><text x="8" y="27" font-size="22" fill="#26c" stroke="none">Σ</text></svg></button>
                        <button aria-label="Raumschnitt"><svg viewBox="0 0 48 48"><path d="M4 5h40v38H29V29c-8 0-12 6-12 14H4z" fill="#eee"/><path d="M5 20h38" stroke="#26c" stroke-width="4"/></svg></button>
                    </div>
                </section>
                <h3><svg viewBox="0 0 16 16"><path d="M3 1v14l10-7z" stroke="#97a7cf"/></svg>Erweiterte Wandfunktionen</h3>
                <h3><svg viewBox="0 0 16 16"><path d="M3 1v14l10-7z" stroke="#97a7cf"/></svg>Erweiterte Dachfunktionen</h3>
                <section>
                    <h3><svg viewBox="0 0 16 16"><path d="M15 1v14H1z" fill="#97a7cf" stroke="none"/></svg>Ausfertigung</h3>
                    <div>
                        <button aria-label="Text"><svg viewBox="0 0 48 48"><text x="24" y="41" font-size="44" font-weight="800" text-anchor="middle" fill="#505050" stroke="none">A</text></svg></button>
                        <button aria-label="Bemaßung"><svg viewBox="0 0 48 48"><path d="M1 5v38M23 5v38M45 5v38M3 15h19M25 15h18M7 11l-5 4 5 4M17 11l5 4-5 4M30 11l-5 4 5 4M39 11l5 4-5 4"/></svg></button>
                        <button aria-label="Schraffur"><svg viewBox="0 0 48 48"><path d="M4 10l6-6M4 18L18 4M4 26L26 4M4 34L34 4M4 42L42 4M10 44l34-33M18 44l26-25M26 44l18-17M34 44l10-9"/></svg></button>
                        <button aria-label="Ausschnitt"><svg viewBox="0 0 48 48"><path d="M2 27h44M21 4v40M27 4v40M6 4l36 40M10 4l34 40M36 4L14 44"/><path d="M9 13h31v22H9z" fill="#fff" stroke="#26c"/></svg></button>
                        <button aria-label="Legende"><svg viewBox="0 0 48 48"><path d="M15 17h30v26H15zM20 30h3M27 30h14M20 37h3M27 37h14M30 23h11" fill="#eee"/><path d="M6 6h24v23H6z" fill="#505050" stroke="none"/><text x="18" y="25" font-size="20" font-weight="400" text-anchor="middle" fill="#eee" stroke="none">A</text></svg></button>
                        <button aria-label="Hinweislinie"><svg viewBox="0 0 48 48"><path d="M2 16h20l19 15"/><path d="M43 33l-10-2 5-7z" fill="#505050" stroke="none"/></svg></button>
                        <button aria-label="Höhenkote"><svg viewBox="0 0 48 48"><text x="24" y="22" font-size="20" text-anchor="middle" fill="#505050" stroke="none">+0.0</text><path d="M12 29h23L24 40z" fill="#505050" stroke="none"/><path d="M9 42h30"/></svg></button>
                        <button aria-label="Höhenpunkt"><svg viewBox="0 0 48 48"><text x="30" y="20" font-size="15" text-anchor="middle" fill="#505050" stroke="none">+0.1</text><circle cx="15" cy="32" r="9" fill="#fff"/><path d="M15 32V23a9 9 0 0 0-9 9zM15 32v9a9 9 0 0 0 9-9z" fill="#505050"/><path d="M1 32h28M15 18v28" stroke-width="1"/></svg></button>
                        <button aria-label="Durchmesser"><svg viewBox="0 0 48 48"><circle cx="24" cy="24" r="20"/><path d="M6 24h36M12 20l-6 4 6 4M36 20l6 4-6 4"/></svg></button>
                        <button aria-label="Radius"><svg viewBox="0 0 48 48"><path d="M4 15c17 0 30 10 30 28M43 7L28 21"/><path d="M25 23l9-2-5-6z" fill="#505050" stroke="none"/></svg></button>
                        <button aria-label="Bogenmaß"><svg viewBox="0 0 48 48"><path d="M5 5v11M34 43h11M8 10c17 0 31 14 31 30M5 19c15 0 25 10 25 26M13 6l-6 4 6 4M35 35l4 6 4-6"/></svg></button>
                        <button aria-label="Winkelmaß"><svg viewBox="0 0 48 48"><path d="M33 10L4 38h41M31 16c5 5 7 12 7 20M31 22v-7l7 3M34 31l4 6 3-7"/></svg></button>
                        <button aria-label="Maß bis"><svg viewBox="0 0 48 48"><path d="M4 13h36M43 5v35"/><path d="M42 13l-9-4v8z" fill="#505050" stroke="none"/></svg></button>
                        <button aria-label="Kettenmaß"><svg viewBox="0 0 48 48"><path d="M3 5v38M33 26v17M5 12h38M5 35h27M10 8l-5 4 5 4M38 8l6 4-6 4M10 31l-5 4 5 4M27 31l5 4-5 4"/></svg></button>
                        <button aria-label="Pfeil"><svg viewBox="0 0 48 48"><path d="M10 23h33"/><path d="M6 23l9-4v8z" fill="#505050" stroke="none"/></svg></button>
                    </div>
                </section>
                <section>
                    <h3><svg viewBox="0 0 16 16"><path d="M15 1v14H1z" fill="#97a7cf" stroke="none"/></svg>Freiformen</h3>
                    <div>
                        <button aria-label="Fläche"><svg viewBox="0 0 48 48"><path d="M3 20h26l17 12H29l-10-6h-7z" fill="#eee"/></svg></button>
                        <button aria-label="Profil offen"><svg viewBox="0 0 48 48"><path d="M3 11h25l17 12v18H29l-8-6H11l-8-6z" fill="#ddd"/><path d="M3 11l9 7h9l8 6h16M12 18v17M21 18v17M29 24v17M28 11v10"/><path d="M3 11l9 7v17l-9-6zM21 18l8 6v17l-8-6z" fill="#aaa"/></svg></button>
                        <button aria-label="Profil"><svg viewBox="0 0 48 48"><path d="M3 11h25l17 12v18H29l-8-6H11l-8-6z" fill="#eee"/><path d="M3 11l9 7h9l8 6M12 18v17"/><path d="M12 18h9v17h-9zM29 23h16v18H29z" fill="#aaa"/></svg></button>
                        <button aria-label="Rotation offen"><svg viewBox="0 0 48 48"><path d="M3 22C3 8 44 8 44 22v17H30V27c-4-3-10-3-14 0v12H3z" fill="#ddd"/><ellipse cx="24" cy="21" rx="10" ry="5" fill="#aaa"/><path d="M3 22c1 4 5 5 13 5M44 22c-1 4-5 5-14 5M8 27v12M39 27v12"/><path d="M23 2v44" stroke="#26c"/></svg></button>
                        <button aria-label="Rotation"><svg viewBox="0 0 48 48"><path d="M3 22C3 8 44 8 44 22v17H30V27c-4-3-10-3-14 0v12H3z" fill="#eee"/><ellipse cx="24" cy="21" rx="10" ry="5" fill="#aaa"/><path d="M8 28h9v11H8zM30 28h9v11h-9z" fill="#aaa"/><path d="M23 2v44" stroke="#26c"/></svg></button>
                        <button aria-label="Sweep"><svg viewBox="0 0 48 48"><path d="M3 11c18-2 26 0 42 16v14H30C22 31 20 28 12 28l-9-4z" fill="#ddd"/><path d="M12 17c10 0 12 3 18 10v14C22 31 20 28 12 28z" fill="#aaa"/><path d="M12 17c10-1 12 3 18 10h15v14H30V27" stroke="#26c"/><path d="M3 11l9 6v11"/></svg></button>
                        <button aria-label="Loft"><svg viewBox="0 0 48 48"><path d="M5 17c16-6 32-2 38 10l-9 10c-4-6-12-7-21-2l-8-6z" fill="#aaa"/><path d="M5 17l8 6v15l-8-6z" fill="#eee" stroke="#26c"/><circle cx="37" cy="32" r="7" fill="#ddd" stroke="#26c"/></svg></button>
                        <button aria-label="Freifläche"><svg viewBox="0 0 48 48"><path d="M3 21c16-12 34-9 42 14-10-4-18-2-26 2-2-10-8-14-16-16z" fill="#ddd"/><path d="M28 13c8 2 14 10 17 22l-10-1z" fill="#aaa" stroke="none"/></svg></button>
                        <button aria-label="Risse"><svg viewBox="0 0 48 48"><path d="M2 23h22M26 1v45"/><path d="M6 4h11v15H6zM6 30h11v11H6z" stroke="#26c"/><path d="M30 24h12l3 4v14H33l-3-3zM33 28h12M33 28v14" fill="#ddd"/></svg></button>
                        <button aria-label="Risse 2"><svg viewBox="0 0 48 48"><path d="M0 23h48M23 1v45"/><path d="M5 4h13v15H5zM5 30h13v11H5zM29 6v13h11z" stroke="#26c"/><path d="M27 27h10l9 17H35z" fill="#ddd"/><path d="M27 27v12l8 5"/></svg></button>
                        <button aria-label="Boolesche Operation"><svg viewBox="0 0 48 48"><path d="M5 7h25v16H5z" fill="#eee"/><path d="M19 15h23v14H19z" fill="#eee"/><path d="M19 15h11v8H19z" fill="#aaa"/><text x="24" y="46" font-size="18" text-anchor="middle" fill="#505050" stroke="none">A⊕B</text></svg></button>
                        <button aria-label="Spirale"><svg viewBox="0 0 48 48"><path d="M2 29h44" stroke="#d65"/><path d="M22 3v44" stroke="#09c"/><path d="M4 44l37-35" stroke="#7c6"/><path d="M10 20c2-8 25-8 25 2s-26 10-26 4 25-8 25 4-24 10-24 2"/></svg></button>
                        <button aria-label="3D Polylinie"><svg viewBox="0 0 48 48"><path d="M2 29h43" stroke="#d65"/><path d="M23 3v44" stroke="#09c"/><path d="M4 45L45 3" stroke="#7c6"/><path d="M5 36h24V13l8-8"/><g fill="#26c" stroke="none"><circle cx="5" cy="36" r="3"/><circle cx="29" cy="36" r="3"/><circle cx="29" cy="13" r="3"/><circle cx="37" cy="5" r="3"/></g></svg></button>
                        <button aria-label="3D Kurve"><svg viewBox="0 0 48 48"><path d="M2 24h21M23 2v44M26 18c3 6 10 4 12-2"/><path d="M6 18L18 6M4 45c10 0 15-4 16-13" stroke="#26c"/><path d="M32 14v15" stroke="#09c"/><path d="M32 29h14" stroke="#d65"/><path d="M32 29l12-12" stroke="#7c6"/></svg></button>
                    </div>
                </section>
                <h3><svg viewBox="0 0 16 16"><path d="M3 1v14l10-7z" stroke="#97a7cf"/></svg>Gelände</h3>
                <h3><svg viewBox="0 0 16 16"><path d="M3 1v14l10-7z" stroke="#97a7cf"/></svg>Umbauplanung</h3>
                <h3><svg viewBox="0 0 16 16"><path d="M3 1v14l10-7z" stroke="#97a7cf"/></svg>Kamera</h3>
                <h3><svg viewBox="0 0 16 16"><path d="M3 1v14l10-7z" stroke="#97a7cf"/></svg>Auswertung</h3>
                <h3><svg viewBox="0 0 16 16"><path d="M3 1v14l10-7z" stroke="#97a7cf"/></svg>BIM Werkzeuge</h3>
                <h3><svg viewBox="0 0 16 16"><path d="M3 1v14l10-7z" stroke="#97a7cf"/></svg>3D Plattformen</h3>
            </div>
        </aside>

        <!-- Zeichenfläche -->
        <div class="flex min-w-0 flex-1 flex-col">
            <div class="flex flex-1 bg-white px-[273px]">
                <div class="relative flex-1 border border-b-0 border-black">
                    <div class="absolute -top-px left-[626px] h-[33px] w-16 bg-white"><div class="mx-auto h-full w-px bg-black"></div></div>
                </div>
            </div>

            <div class="flex h-[41px] shrink-0 items-start justify-between bg-[#5d6b99]">
                <div class="flex h-[37px] items-center bg-[#efefef] pr-2 pl-[51px] font-bold text-black [clip-path:polygon(0_0,100%_0,100%_100%,36px_100%)]">
                    <svg class="mr-4 size-9 fill-none stroke-[#505050] stroke-2"><use href="#model"/></svg>
                    Modell
                    <button aria-label="Ansicht schließen" class="ml-[18px]"><svg class="size-4 fill-none stroke-[#777] stroke-2"><use href="#close"/></svg></button>
                </div>
                <svg class="mt-4 mr-1 h-[10px] w-[18px] text-white"><use href="#down"/></svg>
            </div>

            <!-- Ansichtsleiste -->
            <div class="flex h-[72px] shrink-0 items-center pt-[2px] pr-[9px] pl-[11px]">
                <div class="flex gap-[3px] fill-none stroke-[#505050] stroke-2 [&_svg]:size-12 [&_svg]:overflow-visible [&>button]:grid [&>button]:h-[53px] [&>button]:w-13 [&>button]:place-items-center">
                    <button aria-label="Ansicht einstellen"><svg viewBox="0 0 48 48"><path d="M4 12h38v28H4z" fill="#cfe0f4"/><use href="#cfg" x="24" y="0" width="22" height="22"/></svg></button>
                    <button aria-label="Zoom Fenster"><svg viewBox="0 0 48 48"><path d="M5 7h38v34H5z" stroke-dasharray="7 6"/><use href="#lens"/><g fill="#26c" stroke="none"><circle cx="43" cy="7" r="3"/><circle cx="5" cy="41" r="3"/></g></svg></button>
                    <button aria-label="Zoom zurück"><svg viewBox="0 0 48 48"><use href="#lens" x="-5" y="10" width="38" height="38"/><use href="#arrowL" x="24" y="3" width="20" height="18"/></svg></button>
                    <button aria-label="Zoom Ausschnitt"><svg viewBox="0 0 48 48"><path d="M14 14h24v18H14z" fill="#cfe0f4"/><use href="#lens" y="10" x="-5" width="38" height="38"/><path d="M20 3h10l-5 7zM48 18v12l-6-6z" fill="#26c" stroke="none"/></svg></button>
                    <button aria-label="Zoom alles"><svg viewBox="0 0 48 48"><rect x="5" y="10" width="38" height="29" rx="2" fill="#cfe0f4"/><path d="M9 14h8l-8 8zM39 14h-8l8 8zM9 35h8l-8-8zM39 35h-8l8-8z" fill="#26c" stroke="none"/></svg></button>
                    <button aria-label="Begehen"><svg viewBox="0 0 48 48"><circle cx="24" cy="6" r="4" fill="#eee"/><path d="M21 12h6l8 12M21 12l-7 12M22 14l-1 14-7 17M27 14l1 14 7 17M22 28l7 0" /></svg></button>
                    <button aria-label="VR Brille"><svg viewBox="0 0 48 48"><path d="M10 15h28c5 3 5 8 5 14s-3 9-7 9h-6l-6-7-6 7h-6c-4 0-7-3-7-9s0-11 5-14z" fill="#ddd"/><path d="M10 15h28" stroke-width="4"/></svg></button>
                    <button aria-label="Blatt"><svg viewBox="0 0 48 48"><path d="M6 9h38v29H6zM29 38v-9h15" fill="#eee"/></svg></button>
                    <button aria-label="Ansichtsrahmen"><svg viewBox="0 0 48 48"><path d="M7 5h36v28H7z" fill="#eee"/><path d="M10 21h32" stroke="#d65" stroke-dasharray="5 3"/><path d="M25 8v22" stroke="#7c6"/><circle cx="12" cy="38" r="7" fill="#eee"/><path d="M12 34v8M8 38h8"/></svg></button>
                    <button aria-label="Plotten"><svg viewBox="0 0 48 48"><use href="#printer" y="12" width="36" height="36"/><path d="M36 4l6 4-14 18-5 2z" fill="#79d"/></svg></button>
                    <button aria-label="Teil schattiert"><svg viewBox="0 0 48 48"><path d="M3 9h24l13 12v17H18L3 28z" fill="#999"/><path d="M3 9h24l13 12H18z" fill="#ddd"/><path d="M20 30h24v15H20z" stroke-dasharray="4 4"/><g fill="#26c" stroke="none"><circle cx="44" cy="29" r="3"/><circle cx="20" cy="44" r="3"/></g></svg></button>
                    <button aria-label="Schattiert"><svg viewBox="0 0 48 48" stroke="none"><path d="M4 9h24l15 12v17H20L4 28z" fill="#999"/><path d="M4 9h24l15 12H20z" fill="#ddd"/><path d="M20 21h23v17H20z" fill="#bbb"/></svg></button>
                    <button aria-label="Schattiert mit Kanten"><svg viewBox="0 0 48 48"><path d="M4 9h24l15 12v17H20L4 28z" fill="#777"/><path d="M4 9h24l15 12H20z" fill="#ddd"/><path d="M20 21h23v17H20z" fill="#999"/></svg></button>
                    <button aria-label="Verdeckt"><svg viewBox="0 0 48 48"><path d="M4 9h24l15 12v17H20L4 28zM4 9l16 12h23M20 21v17"/></svg></button>
                    <button aria-label="Drahtgitter"><svg viewBox="0 0 48 48"><path d="M4 9h24l15 12v17H20L4 28zM4 9l16 12h23M20 21v17M28 9v17M4 26h24l15 12"/></svg></button>
                    <button aria-label="Rendern"><svg viewBox="0 0 48 48"><circle cx="20" cy="29" r="15" fill="#ccc"/><ellipse cx="17" cy="24" rx="5" ry="6" fill="#eee" stroke="none"/><use href="#half" x="27" y="2" width="16" height="16"/></svg></button>
                    <button aria-label="Bodenplatte" class="border-2 border-[#0078d7] bg-[#b3c6fb]"><svg viewBox="0 0 48 48"><path d="M9 14h18l13 8v13H26l-4-13z" fill="#ddd" stroke="none"/><path d="M22 22h18v13H22z" fill="#bbb" stroke="none"/><path d="M8 15l14 8v21"/><use href="#half" x="29" y="1" width="15" height="15"/></svg></button>
                    <button aria-label="Achsen"><svg viewBox="0 0 48 48"><use href="#axes" y="14" x="2" width="34" height="34"/><use href="#half" x="31" y="2" width="15" height="15"/></svg></button>
                    <button aria-label="Achsen setzen"><svg viewBox="0 0 48 48"><use href="#axes" x="6" y="-6" width="42" height="42"/><circle cx="8" cy="37" r="7" fill="#eee"/><path d="M8 33v8M4 37h8"/></svg></button>
                    <button aria-label="Arbeitsebene Wand"><svg viewBox="0 0 48 48"><path d="M5 3h18v14l-18 30z" fill="#ddd"/><path d="M23 3v30L10 46"/><path d="M20 28h22" stroke="#09c" stroke-width="3"/><path d="M20 28L36 8" stroke="#d65"/></svg></button>
                    <button aria-label="Arbeitsebene 3 Punkte"><svg viewBox="0 0 48 48"><use href="#axes" x="-5"/><g fill="#26c" stroke="none"><circle cx="7" cy="38" r="3"/><circle cx="20" cy="27" r="3"/><circle cx="34" cy="38" r="3"/></g></svg></button>
                    <button aria-label="Arbeitsebene Element"><svg viewBox="0 0 48 48"><use href="#axes" x="8" y="-4" width="38" height="38"/><path d="M18 29l-4 14-3-4-8 6 7-10-3-2z" fill="#505050" stroke="none"/></svg></button>
                    <button aria-label="Ursprung"><svg viewBox="0 0 48 48"><use href="#axes" x="-5"/><g fill="#26c" stroke="none"><circle cx="7" cy="20" r="3"/><circle cx="7" cy="38" r="3"/></g></svg></button>
                    <button aria-label="Achsen tauschen"><svg viewBox="0 0 48 48"><use href="#axes" x="-5"/><use href="#swap" x="25" y="2" width="22" height="13" stroke-width="1"/></svg></button>
                    <button aria-label="Ebene verschieben"><svg viewBox="0 0 48 48"><path d="M5 4h26l12 12H18zM5 34h26l12 12H18zM5 4v30M43 16v30" stroke="#aaa"/><path d="M5 18h26l12 12H18z" fill="#eee"/><path d="M24 6v36" stroke="#26c"/></svg></button>
                    <button aria-label="Objekt drehen"><svg viewBox="0 0 48 48"><path d="M4 3h14l6 5v12H10l-6-5zM4 3l6 5h14M10 8v12" stroke="#26c"/><path d="M37 26l9 10-9 10-9-10z" fill="#eee"/><path d="M18 38c2 6 8 6 10 4M36 18c4 2 3 6 2 8"/></svg></button>
                    <button aria-label="Achsen drehen"><svg viewBox="0 0 48 48"><path d="M24 24L6 6" stroke="#7c6"/><path d="M24 24L42 6M34 6h8v8" stroke="#d65"/><path d="M36 24c6 18-16 26-18 12" stroke="#26c"/></svg></button>
                    <button aria-label="Punkt fangen"><svg viewBox="0 0 48 48"><path d="M6 22l16 4M26 4l2 16M22 26l12 4"/><path d="M34 20l12 12-10 12-11-10z" fill="#eee"/><g fill="#26c" stroke="none"><circle cx="13" cy="11" r="3"/><circle cx="35" cy="33" r="3"/></g></svg></button>
                    <button aria-label="Raster"><svg viewBox="0 0 48 48"><path d="M3 28h42M3 36h42M3 44h42" stroke="#26c" stroke-width="4" stroke-dasharray="4 3"/><use href="#half" x="30" y="2" width="15" height="15"/></svg></button>
                    <button aria-label="Texte" class="border-2 border-[#0078d7] bg-[#b3c6fb]"><svg viewBox="0 0 48 48"><text x="20" y="41" font-size="32" font-weight="800" text-anchor="middle" fill="#505050" stroke="none">A</text><use href="#half" x="29" y="1" width="15" height="15"/></svg></button>
                    <button aria-label="Hinweise" class="border-2 border-[#0078d7] bg-[#b3c6fb]"><svg viewBox="0 0 48 48"><path d="M3 28h19l17 15"/><path d="M42 45l-10-2 5-7z" fill="#505050" stroke="none"/><use href="#half" x="29" y="1" width="15" height="15"/></svg></button>
                    <button aria-label="Maße" class="border-2 border-[#0078d7] bg-[#b3c6fb]"><svg viewBox="0 0 48 48"><path d="M7 19v26M38 19v26M9 31h27M15 27l-6 4 6 4M31 27l6 4-6 4"/><use href="#half" x="29" y="1" width="15" height="15"/></svg></button>
                    <button aria-label="Schraffuren" class="border-2 border-[#0078d7] bg-[#b3c6fb]"><svg viewBox="0 0 48 48"><path d="M4 32l8-8M4 40l16-16M8 44l20-20M16 44l20-20M24 44l19-19M32 44l11-11"/><use href="#half" x="29" y="1" width="15" height="15"/></svg></button>
                </div>
                <svg class="mr-[13px] ml-auto size-12 fill-none stroke-[#505050] stroke-2" viewBox="0 0 48 48"><path d="M0 16h48v18H0z" fill="#eee"/><path d="M0 16h8L0 34zM42 16h6v18h-6z" fill="#aaa"/><path d="M8 21h34M8 28h34M40 16v18"/><path d="M24 3v42" stroke="#26c" stroke-width="3"/></svg>
                <div class="mr-[9px] grid h-10 w-[382px] border-2 border-[#b9c5e3] bg-[#f8f9fe]">
                    <select aria-label="Planungsphase" class="appearance-none pl-1 [grid-area:1/1]"><option>Entwurfsplanung</option></select>
                    <div class="pointer-events-none grid w-10 place-items-center justify-self-end bg-[#cbd5f0] text-[#777] [grid-area:1/1]"><svg class="h-[7px] w-[11px]"><use href="#down"/></svg></div>
                </div>
                <div class="grid h-10 w-[382px] border-2 border-[#b9c5e3] bg-[#f8f9fe]">
                    <select aria-label="Einschränkung" class="appearance-none pl-1 [grid-area:1/1]"><option>Keine Einschränkung</option></select>
                    <div class="pointer-events-none grid w-10 place-items-center justify-self-end bg-[#cbd5f0] text-[#777] [grid-area:1/1]"><svg class="h-[7px] w-[11px]"><use href="#down"/></svg></div>
                </div>
            </div>
            <div class="flex h-14 shrink-0 items-start gap-[9px] px-[9px]">
                <input type="text" aria-label="Befehlszeile" class="h-[43px] min-w-0 flex-1 border-2 border-white border-b-[#7d8190] bg-[#efefef]">
                <div class="mt-1 grid h-10 w-[330px] border-2 border-[#b9c5e3] bg-[#f8f9fe]">
                    <select aria-label="Maßstab" class="appearance-none pl-1 [grid-area:1/1]"><option>1:100</option></select>
                    <div class="pointer-events-none grid w-10 place-items-center justify-self-end bg-[#cbd5f0] text-[#777] [grid-area:1/1]"><svg class="h-[7px] w-[11px]"><use href="#down"/></svg></div>
                </div>
                <div class="mt-1 grid h-10 w-[246px] border-2 border-[#b9c5e3] bg-[#f8f9fe]">
                    <select aria-label="Einheit" class="appearance-none pl-1 [grid-area:1/1]"><option>cm</option></select>
                    <div class="pointer-events-none grid w-10 place-items-center justify-self-end bg-[#cbd5f0] text-[#777] [grid-area:1/1]"><svg class="h-[7px] w-[11px]"><use href="#down"/></svg></div>
                </div>
                <div class="mt-1 grid h-10 w-[246px] border-2 border-[#b9c5e3] bg-[#f8f9fe]">
                    <select aria-label="Papierformat" class="appearance-none pl-1 [grid-area:1/1]"><option>A3</option></select>
                    <div class="pointer-events-none grid w-10 place-items-center justify-self-end bg-[#cbd5f0] text-[#777] [grid-area:1/1]"><svg class="h-[7px] w-[11px]"><use href="#down"/></svg></div>
                </div>
            </div>
        </div>

        <!-- Geschoss und Ansicht -->
        <aside class="flex w-[442px] shrink-0 flex-col border-l-2 border-[#5d6b99] bg-[#5d6b99] fill-none stroke-[#505050] stroke-2">
            <div class="flex h-10 shrink-0 items-center gap-5 bg-[#41558b] pr-[11px] pl-[10px] text-white">
                <h2 class="mr-auto">Geschoss</h2>
                <svg class="h-[10px] w-4 text-[#c8c8c8]"><use href="#down"/></svg>
                <svg class="h-[18px] w-4 fill-none stroke-[#c8c8c8] stroke-2"><use href="#pin"/></svg>
                <svg class="size-4 fill-none stroke-[#c8c8c8] stroke-3"><use href="#close"/></svg>
            </div>
            <div class="flex h-[68px] shrink-0 items-center bg-[#cbd5f0] [&_svg]:size-12 [&>button]:grid [&>button]:w-16 [&>button]:place-items-center [&>hr]:mx-[2px] [&>hr]:h-9 [&>hr]:w-[2px] [&>hr]:border-0 [&>hr]:bg-white">
                <button aria-label="Geschossbuch"><svg viewBox="0 0 48 48"><path d="M9 4h30v42H9z" fill="#eee"/><path d="M6 9h5M6 15h5M6 21h5M6 27h5M6 33h5M6 39h5"/><path d="M17 25h13v9H17z" fill="#ddd" stroke="#999"/><path d="M14 25l10-8 10 8z" fill="#ea9" stroke="#d65"/></svg></button>
                <button aria-label="Geschosse verwalten"><svg viewBox="0 0 48 48"><path d="M5 7h34l5 5v30H12l-7-5z" fill="#ddd"/><path d="M5 7l7 5h32M12 12v30M12 22h32M12 32h32M5 17l7 5M5 27l7 5"/><use href="#cfg" x="26" y="1" width="22" height="22"/></svg></button>
                <button aria-label="Geschoss einfügen"><svg viewBox="0 0 48 48"><path d="M4 17h34l6 6v20H12l-8-6z" fill="#ddd"/><path d="M4 17l8 6h32M12 23v20"/><path d="M4 37h34l6 6H12zM24 40V8M20 12l4-6 4 6" stroke="#26c"/></svg></button>
                <hr>
                <button aria-label="Liste"><svg viewBox="0 0 48 48"><rect x="7" y="9" width="35" height="30" rx="3" fill="#cfe0f4"/><path d="M15 14h19v19H15zM15 20h19M15 27h19" stroke="#26c"/></svg></button>
                <button aria-label="Struktur"><svg viewBox="0 0 48 48"><path d="M3 2v7h5M15 17v7h5M27 31v7h5"/><path d="M11 5h5l2 2h5v7H11zM23 19h5l2 2h5v7H23zM35 33h5l2 2h5v7H35z" fill="#eda"/></svg></button>
                <hr>
                <button aria-label="Invertieren"><svg><use href="#invert"/></svg></button>
            </div>
            <table class="block h-[484px] shrink-0 border-separate border-spacing-0 bg-[linear-gradient(90deg,#efefef_64px,#ccc_64px,#ccc_66px,#efefef_66px,#efefef_130px,#ccc_130px,#ccc_132px,#efefef_132px)] text-center text-black [&_svg]:mx-auto [&_svg]:size-9 [&_td]:p-0 [&_th]:p-0">
                <thead><tr>
                    <th class="h-[50px] w-16 bg-[#cbd5f0]"><svg viewBox="0 0 36 36"><path d="M3 18h20l10 9H13z" fill="#eee" stroke="#bbb"/></svg></th>
                    <th class="w-[2px]"></th>
                    <th class="w-16 bg-[#cbd5f0]"><svg viewBox="0 0 36 36"><path d="M5 6h22l4 4v20H10l-5-4zM5 6l5 4h21M10 10v20M10 17h21M10 23h21" fill="#eee" stroke="#bbb"/></svg></th>
                </tr></thead>
                <tbody>
                    <tr><td class="h-10"></td><td></td><td><svg viewBox="0 0 36 36" class="stroke-[#bbb]"><path d="M3 21h20l10 8H13z"/></svg></td></tr>
                    <tr><td class="h-10">1</td><td></td><td><svg viewBox="0 0 36 36" class="stroke-[#bbb]"><path d="M5 3v30M12 3v18h20M12 33v-7h20"/><path d="M16 16h10l-5 5z" fill="#bbb"/></svg></td></tr>
                    <tr><td class="h-10">0</td><td></td><td><svg viewBox="0 0 36 36"><path d="M5 3h7v19h20v5H12v6H5z" fill="#79d" stroke="none"/><path d="M12 3v19h20M12 33v-6h20"/><path d="M21 16l2-5 8-8 3 3-8 8z" fill="#eda" stroke-width="1"/></svg></td></tr>
                </tbody>
            </table>
            <div class="mb-1 grid h-[54px] shrink-0 grid-cols-3 text-[#dde3f5] [&>button]:flex [&>button]:items-center [&>button]:pl-1 [&_svg]:mr-[7px] [&_svg]:size-12 [&_svg]:shrink-0">
                <button class="border-r border-b border-[#b9c5e3] bg-[#f8f9fe] text-[#0a5ca8]"><svg viewBox="0 0 48 48"><path d="M6 3h9v40H6z" fill="#eee" stroke="none"/><path d="M6 3v40M15 3v24M15 35v8M6 27h38M6 35h38"/><path d="M6 28h38v6H6z" fill="#aaa"/><path d="M22 18h14l-7 7z" fill="#505050" stroke="none"/></svg>&nbsp;Gesc...</button>
                <button><svg viewBox="0 0 48 48"><path d="M8 8h28v36H8zM13 17h18M13 24h18M13 31h18M13 38h18" fill="#eee"/><path d="M28 16L43 2l6 5-15 14z" fill="#eda"/></svg>Mess...</button>
                <button><svg viewBox="0 0 48 48"><path d="M5 6v35" stroke="#09c"/><path d="M5 41l22-22" stroke="#7c6"/><path d="M5 41h37" stroke="#d65"/><use href="#swap" x="25" y="1" width="22" height="13" stroke-width="1"/></svg>Arbeit...</button>
            </div>

            <div class="flex h-10 shrink-0 items-center gap-5 bg-[#41558b] pr-[11px] pl-[10px] text-white">
                <h2 class="mr-auto">Ansicht</h2>
                <svg class="h-[10px] w-4 text-[#c8c8c8]"><use href="#down"/></svg>
                <svg class="h-[18px] w-4 fill-none stroke-[#c8c8c8] stroke-2"><use href="#pin"/></svg>
                <svg class="size-4 fill-none stroke-[#c8c8c8] stroke-3"><use href="#close"/></svg>
            </div>
            <div class="flex h-[68px] shrink-0 items-center bg-[#cbd5f0] [&_svg]:size-12 [&_svg]:overflow-visible [&>button]:grid [&>button]:w-16 [&>button]:place-items-center">
                <button aria-label="Neue Ansicht"><svg viewBox="0 0 48 48"><path d="M5 9h38v29H5zM27 38v-9h16" fill="#eee"/></svg></button>
                <i class="w-8 text-center text-xs text-black not-italic">▼</i>
                <button class="text-[32px] font-bold text-[#505050]">3D</button>
                <button aria-label="PDF DXF speichern"><svg viewBox="0 0 48 48"><g stroke="#26c"><use href="#floppy" x="7" y="0" width="34" height="34"/></g><text x="24" y="45" font-size="12" font-weight="700" text-anchor="middle" fill="#505050" stroke="none">PDF|DXF</text></svg></button>
                <button aria-label="Darstellung umkehren"><svg><use href="#invert"/></svg></button>
                <button aria-label="Modell laden"><svg viewBox="0 0 48 48"><use href="#model" x="-1" y="9" width="40" height="40"/><use href="#arrowL" x="26" y="2" width="22" height="18"/></svg></button>
            </div>
            <ul class="shrink-0 bg-[#cbd5f0] text-[23px] font-bold [&>li]:flex [&>li]:h-9 [&>li]:items-center">
                <li class="gap-2 pl-2 text-[#1f62c4]">
                    <svg class="size-4 stroke-black stroke-3" viewBox="0 0 16 16"><path d="M1 4l7 7 7-7"/></svg>
                    <svg class="size-8"><use href="#model"/></svg>
                    <svg class="mr-1 ml-[3px] h-6 w-[18px]" viewBox="0 0 18 24"><path d="M1 1h16v22H1z" fill="#eee"/><path d="M5 7h9M5 12h9M5 17h9" stroke="#d65"/></svg>
                    Modell
                </li>
                <li class="gap-[14px] pl-[10px]"><svg class="size-4 stroke-[#888] stroke-3" viewBox="0 0 16 16"><path d="M4 1l7 7-7 7"/></svg>Modellansichten</li>
                <li class="pl-10">Ansichten</li>
                <li class="pl-10">Schnitte</li>
                <li class="pl-10">Grundrisse</li>
                <li class="pl-10">Details</li>
                <li class="pl-10">Plots</li>
                <li class="pl-10">Layoutvorlagen</li>
                <li class="pl-10">Referenz</li>
            </ul>
            <div class="flex-1 bg-white"></div>
            <div class="grid h-[55px] shrink-0 grid-cols-5 text-[#dde3f5] [&>button]:flex [&>button]:items-center [&>button]:gap-1 [&>button]:pl-[7px] [&_svg]:size-12 [&_svg]:shrink-0">
                <button aria-label="Ansichten" class="border-b border-[#b9c5e3] bg-[#f8f9fe] text-[#0a5ca8]"><svg viewBox="0 0 48 48"><path d="M5 9h38v29H5zM10 14h11v18H10zM27 16h12v9H27zM27 38v-8h16" fill="#eee"/></svg>...</button>
                <button aria-label="Ebenen"><svg><use href="#layers"/></svg>...</button>
                <button aria-label="Bibliothek"><svg viewBox="0 0 48 48"><path d="M9 6h12v34H9zM9 12h12M9 34h12M23 8l8-2 10 33-9 2zM24 13l9-2M30 35l9-2" fill="#eee"/></svg>...</button>
                <button aria-label="Materialien"><svg viewBox="0 0 48 48"><path d="M18 8l11 14-11 12L7 22z" fill="#eee"/><path d="M30 20l11 10-7 7-9-8z" fill="#aaa"/><path d="M21 28l11 8-9 8-6-8z" fill="#ddd"/></svg>...</button>
                <button aria-label="Kugel"><svg viewBox="0 0 48 48"><circle cx="24" cy="23" r="15" fill="#79d"/><path d="M16 22c0-6 3-9 8-10" stroke="#def" stroke-width="4"/></svg>...</button>
            </div>
        </aside>

        <!-- Seitliche Register -->
        <div class="flex w-[70px] shrink-0 flex-col gap-5 bg-[#5d6b99] pt-[7px] font-['Liberation_Sans',sans-serif] text-2xl text-white">
            <button class="flex h-[163px] flex-col items-center gap-[2px] border-r-6 border-[#41547f] pr-2">
                <svg class="size-12 shrink-0 fill-none stroke-[#505050] stroke-2" viewBox="0 0 48 48"><path d="M4 8h40v28H4z" fill="#eee"/><path d="M4 8h40v5H4z" fill="#505050"/><path d="M24 22v12M24 16v4" stroke="#26c" stroke-width="5"/><path d="M33 10h3M39 10h3" stroke="#fff"/></svg>
                <span class="[writing-mode:vertical-rl]">Infofenster</span>
            </button>
            <button class="flex h-[207px] flex-col items-center gap-[10px] border-r-6 border-[#41547f] pr-2">
                <svg class="size-12 shrink-0 fill-none stroke-[#505050] stroke-2" viewBox="0 0 48 48"><path d="M9 8h27v34H9z" fill="#eee"/><path d="M14 17h3M20 17h11M14 23h3M20 23h11M14 29h3M20 29h11M14 35h3M20 35h11"/><use href="#cfg" x="24" y="1" width="22" height="22"/></svg>
                <span class="[writing-mode:vertical-rl]">Eigenschaften</span>
            </button>
        </div>
    </main>

    <!-- Statusleiste -->
    <footer class="mb-[2px] flex h-[37px] shrink-0 text-white">
        <div class="flex flex-1 items-center bg-[#40508a] pl-1">
            <span class="mr-auto">Bereit</span>
            <span class="mr-[60px]">Z-12</span>
            <span class="mr-4">GPU 8,0GB frei</span>
            <span class="mr-1">NUM</span>
            <span class="mr-1 text-[#8c9cf0]">UF</span>
        </div>
        <div class="w-[70px] bg-[#5d6b99]"></div>
    </footer>

    <!-- Dialog Optionen -->
    <div role="dialog" aria-labelledby="dialog-titel" class="absolute top-[662px] left-1/2 flex h-[824px] w-[1274px] -translate-x-1/2 flex-col overflow-hidden rounded-2xl border-2 border-[#005a9e] bg-[#f0f0f0] text-[23px] text-black shadow-[0_0_30px_rgba(0,0,0,0.2),0_50px_70px_rgba(0,0,0,0.3)]">
        <div class="flex h-14 shrink-0 items-center justify-between bg-white pr-6 pl-3">
            <h2 id="dialog-titel">Optionen - System - Oberfläche</h2>
            <button aria-label="Schließen"><svg class="size-5 fill-none stroke-black stroke-[1px]"><use href="#close"/></svg></button>
        </div>
        <div class="flex min-h-0 flex-1">
            <div class="relative mb-[5px] w-[439px] shrink-0 border border-[#828790] bg-white fill-none stroke-[#505050] stroke-2 pt-px [&_svg]:shrink-0">
                <div class="absolute top-[33px] left-7 h-[425px] border-l border-dotted border-[#888]"></div>
                <ul class="relative [&>li>div]:flex [&>li>div]:h-12 [&>li>div]:items-center [&>li>div]:pl-[19px] [&>li>div>b]:grid [&>li>div>b]:size-[18px] [&>li>div>b]:place-items-center [&>li>div>b]:border [&>li>div>b]:border-[#919191] [&>li>div>b]:bg-[#f4f4f4] [&>li>div>b]:stroke-[#2a4a9c] [&>li>div>b>svg]:size-3 [&>li>div>i]:w-[18px] [&>li>div>i]:border-t [&>li>div>i]:border-dotted [&>li>div>i]:border-[#888] [&>li>div>span]:ml-[5px] [&>li>div>svg]:h-9 [&>li>div>svg]:w-12">
                    <li>
                        <div><b><svg viewBox="0 0 12 12"><path d="M1 6h10"/></svg></b><i></i><svg viewBox="0 0 48 36"><path d="M3 30V4h12l5 4h19v8" fill="#eda"/><path d="M3 30l9-15h33l-9 15z" fill="#e0be60"/></svg><span>System</span></div>
                        <ul class="relative before:absolute before:-top-[2px] before:left-[79px] before:h-[218px] before:border-l before:border-dotted before:border-[#888] [&>li]:flex [&>li]:h-12 [&>li]:items-center [&>li]:pl-[80px] [&>li>i]:w-[26px] [&>li>i]:border-t [&>li>i]:border-dotted [&>li>i]:border-[#888] [&>li>span]:ml-[3px] [&>li>span]:px-[2px] [&>li>span]:leading-[48px] [&>li>svg]:size-12">
                            <li><i></i><svg viewBox="0 0 48 48"><circle cx="24" cy="24" r="21" fill="#eee"/><path d="M9 17h30M9 31h30M29 11v12M19 25v12" stroke-width="3"/></svg><span>Konfiguration</span></li>
                            <li><i></i><svg viewBox="0 0 48 48"><path d="M20 5h8l2 6 6 3 6-2 4 7-5 5v2l5 4-4 7-6-1-6 3-2 6h-8l-2-6-6-3-6 1-4-7 5-4v-2l-5-5 4-7 6 2 6-3z" fill="#ddd"/><circle cx="24" cy="24" r="9" fill="#fff"/></svg><span>Allgemein</span></li>
                            <li><i></i><svg viewBox="0 0 48 48"><path d="M5 11h38v24H5z" fill="#fff"/><path d="M5 34h38M14 41h20M24 35v5" stroke-width="3"/></svg><span class="bg-[#0078d7] text-white">Oberfläche</span></li>
                            <li><i></i><svg viewBox="0 0 48 48"><path d="M43 20V10H7v29h26M12 18h26M12 24h18M12 30h14"/><path d="M32 18l13 13-5 1 5 6-3 2-5-7-4 4z" fill="#505050" stroke="none"/></svg><span>Tooltips</span></li>
                            <li><i></i><svg viewBox="0 0 48 48"><circle cx="24" cy="24" r="19" fill="#ddd"/><path d="M10 12c5-5 11-6 14-6l-2 8-4 2 1 5-6 2 3 5 4 4-2 9C9 37 4 26 10 12zM26 7c8 1 14 6 16 13l-5-1-4 3-5-4 2-5zM27 24l8-2 6 4-5 10-5 3-3-8-3-3z" fill="#505050" stroke="none"/></svg><span>Region</span></li>
                        </ul>
                    </li>
                    <li><div><b><svg viewBox="0 0 12 12"><path d="M1 6h10M6 1v10"/></svg></b><i></i><svg><use href="#folder"/></svg><span>Speichern/Laden</span></div></li>
                    <li><div><b><svg viewBox="0 0 12 12"><path d="M1 6h10M6 1v10"/></svg></b><i></i><svg><use href="#folder"/></svg><span>Arbeitsparameter</span></div></li>
                    <li><div><b><svg viewBox="0 0 12 12"><path d="M1 6h10M6 1v10"/></svg></b><i></i><svg><use href="#folder"/></svg><span>Darstellung</span></div></li>
                    <li><div><b><svg viewBox="0 0 12 12"><path d="M1 6h10M6 1v10"/></svg></b><i></i><svg><use href="#folder"/></svg><span>Ansichten</span></div></li>
                </ul>
            </div>

            <form class="flex flex-1 flex-col pt-[13px] pb-[13px] [&_input[type=checkbox]]:size-[25px] [&_input[type=checkbox]]:appearance-none [&_input[type=checkbox]]:rounded-[5px] [&_input[type=checkbox]]:border-2 [&_input[type=checkbox]]:border-[#707070] [&_input[type=checkbox]]:bg-[#f6f6f6] [&_input[type=checkbox]:checked]:border-[#005fb8] [&_input[type=checkbox]:checked]:bg-[#005fb8] [&_label]:flex [&_label]:items-center [&_label]:gap-[7px] [&_label_svg]:size-[25px] [&_label_svg]:fill-none [&_label_svg]:stroke-white [&_label_svg]:stroke-2 [&_label>span]:grid [&_label>span>*]:[grid-area:1/1]">
                <fieldset class="mr-7 ml-[31px] border border-[#dcdcdc] pr-[6px] pl-[34px]">
                    <legend class="-ml-[28px] px-[2px] text-[22px] leading-8">Oberfläche allgemein</legend>
                    <div class="flex h-10 items-end justify-between">
                        <label for="layout">Ansichtslayout</label>
                        <div class="grid h-10 w-[416px] rounded-[3px] border border-[#ccc] border-b-[#aaa] bg-[#fdfdfd]">
                            <select id="layout" class="appearance-none pl-[3px] [grid-area:1/1]"><option>Ansichten im Registerkartenformat</option></select>
                            <svg class="pointer-events-none mr-2 size-4 self-center justify-self-end fill-none stroke-[#555] stroke-1 [grid-area:1/1]" viewBox="0 0 16 16"><path d="M1 4l7 7 7-7"/></svg>
                        </div>
                    </div>
                    <div class="mt-6 mr-[150px] flex h-[51px] items-center justify-between">
                        <label for="maximal">Maximal geöffnete Ansichten</label>
                        <input id="maximal" type="text" value="16" class="h-[51px] w-[100px] rounded-[3px] border border-[#e5e5e5] border-b-[#868686] bg-white pb-[10px] pl-2">
                    </div>
                    <label class="mt-[5px] h-12"><span><input type="checkbox"></span>Neue Ansichten immer in neuem Fenster öffnen</label>
                    <label class="h-12"><span><input type="checkbox" checked><svg viewBox="0 0 25 25"><path d="M7 13l4 4 8-9"/></svg></span>Register nach Ansichtstyp einfärben</label>
                    <div class="mt-3 mr-[150px] flex h-10 items-end justify-between">
                        <label for="design" class="pl-1">Oberflächen-Design</label>
                        <div class="grid h-10 w-[266px] rounded-[3px] border border-[#ccc] border-b-[#aaa] bg-[#fdfdfd]">
                            <select id="design" class="appearance-none pl-[3px] [grid-area:1/1]"><option>Technisch - Blau</option></select>
                            <svg class="pointer-events-none mr-2 size-4 self-center justify-self-end fill-none stroke-[#555] stroke-1 [grid-area:1/1]" viewBox="0 0 16 16"><path d="M1 4l7 7 7-7"/></svg>
                        </div>
                    </div>
                    <label class="mt-[10px] ml-[316px] h-[43px]"><span><input type="checkbox"></span>Auch in Dialogen</label>
                    <label class="h-12"><span><input type="checkbox"></span>Bildlaufleiste für Grafikfenster verwenden</label>
                    <label class="h-12"><span><input type="checkbox" checked><svg viewBox="0 0 25 25"><path d="M7 13l4 4 8-9"/></svg></span>Benachrichtigungen als Infoblase anzeigen</label>
                    <label class="h-12"><span><input type="checkbox" checked><svg viewBox="0 0 25 25"><path d="M7 13l4 4 8-9"/></svg></span>Welcomescreen beim Start anzeigen</label>
                </fieldset>
                <div class="mt-auto mr-[30px] ml-[10px] flex items-center gap-2 [&>button]:h-[54px] [&>button]:w-[161px] [&>button]:rounded-[4px] [&>button]:border [&>button]:border-[#d0d0d0] [&>button]:bg-[#fdfdfd]">
                    <label class="mr-auto"><span><input type="checkbox" checked><svg viewBox="0 0 25 25"><path d="M7 13l4 4 8-9"/></svg></span>Erweitert</label>
                    <button type="button">OK</button>
                    <button type="button">Abbrechen</button>
                    <button type="button">Hilfe</button>
                </div>
            </form>
        </div>
    </div>
</body>
</html>
